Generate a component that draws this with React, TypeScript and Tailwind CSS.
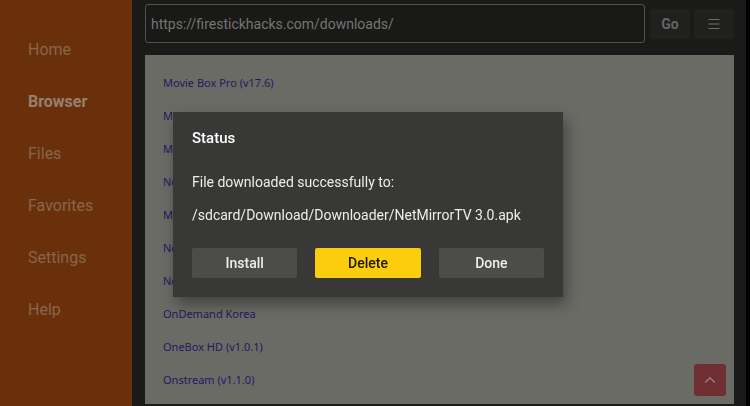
import { ChevronUp } from "lucide-react";

const navItems = ["Home", "Browser", "Files", "Favorites", "Settings", "Help"];

const downloads = [
    "Movie Box Pro (v17.6)",
    "M",
    "M",
    "Ne",
    "M",
    "Ne",
    "Ne",
    "OnDemand Korea",
    "OneBox HD (v1.0.1)",
    "Onstream (v1.1.0)",
];

function Sidebar() {
    return (
        <nav className="w-[132px] shrink-0 bg-[#6a300b] pl-7 pt-[38px]">
            <ul className="flex flex-col gap-7">
                {navItems.map((item) => (
                    <li key={item} className="h-6">
                        <a
                            href="#"
                            className={item === "Browser" ? "text-base leading-6 font-bold text-[#958070]" : "text-base leading-6 text-[#87664d]"}
                        >
                            {item}
                        </a>
                    </li>
                ))}
            </ul>
        </nav>
    );
}

function AddressBar() {
    return (
        <form className="flex items-center gap-1" onSubmit={(e) => e.preventDefault()}>
            <input
                type="text"
                aria-label="Address"
                defaultValue="https://firestickhacks.com/downloads/"
                className="h-[39px] min-w-0 flex-1 rounded-[3px] border border-[#50504e] bg-[#191918] px-[5px] text-sm text-[#757571] outline-none"
            />
            <button type="submit" className="ml-px h-[30px] w-10 rounded-[3px] bg-[#20201f] text-sm font-bold text-[#666662]">
                Go
            </button>
            <button type="button" aria-label="Menu" className="flex h-[30px] w-10 items-center justify-center rounded-[3px] bg-[#20201f]">
                <svg width="12" height="12" viewBox="0 0 12 12" stroke="#6c6c68" strokeWidth="1">
                    <path d="M0.5 1.5H11.5M0.5 6H11.5M0.5 10.5H11.5" />
                </svg>
            </button>
        </form>
    );
}

function StatusDialog() {
    return (
        <div className="fixed inset-0 flex items-center justify-center pr-3.5 pt-[3px]">
            <div
                role="dialog"
                aria-labelledby="status-title"
                className="w-[390px] bg-[#383837] px-[19px] pt-3.5 pb-[19px] text-sm text-[#ededeb] shadow-[3px_7px_14px_rgba(0,0,0,0.4)]"
            >
                <h2 id="status-title" className="text-[15px] leading-6 font-medium text-white">Status</h2>
                <p className="mt-5 leading-6">File downloaded successfully to:</p>
                <p className="mt-[9px] leading-6">/sdcard/Download/Downloader/NetMirrorTV 3.0.apk</p>
                <div className="mt-[21px] grid grid-cols-3 gap-[18px] font-medium">
                    <button className="h-[30px] rounded-[2px] bg-[#4c4c48]">Install</button>
                    <button className="h-[30px] rounded-[2px] bg-[#fbcd0d] text-[#1c1805]">Delete</button>
                    <button className="h-[30px] rounded-[2px] bg-[#4c4c48]">Done</button>
                </div>
            </div>
        </div>
    );
}

export default function App() {
    return (
        <div className="flex h-screen overflow-hidden bg-[#1a1a19] font-['Roboto',sans-serif]">
            <Sidebar />
            <main className="flex min-w-0 flex-1 flex-col gap-3 border-r-4 border-black pt-1 pr-3 pb-0.5 pl-[13px]">
                <AddressBar />
                <div className="relative min-h-0 flex-1 overflow-hidden bg-[#6b6b66] px-[18px] pt-3">
                    <ul className="font-['Noto_Sans',sans-serif] text-[11px] text-[#281660]">
                        {downloads.map((name, i) => (
                            <li key={i} className="h-[33px] leading-8">
                                <a href="#">{name}</a>
                            </li>
                        ))}
                    </ul>
                    {/* back to top */}
                    <button aria-label="Back to top" className="absolute right-2 bottom-2 flex size-8 items-center justify-center rounded-[3px] bg-[#702f33]">
                        <ChevronUp size={18} strokeWidth={1.5} color="#a08482" />
                    </button>
                </div>
            </main>
            <StatusDialog />
        </div>
    );
}
